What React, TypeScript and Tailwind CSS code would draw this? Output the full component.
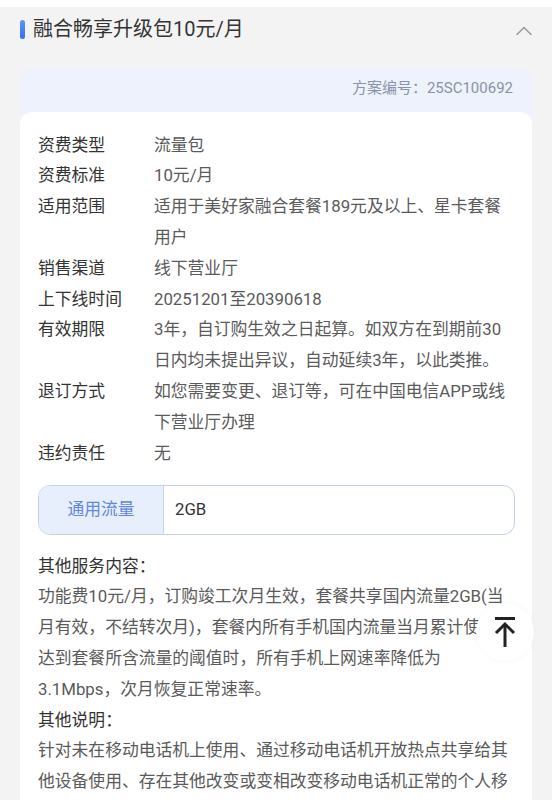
import React from "react";

const rows: { label: string; value: string }[] = [
  { label: "资费类型", value: "流量包" },
  { label: "资费标准", value: "10元/月" },
  { label: "适用范围", value: "适用于美好家融合套餐189元及以上、星卡套餐用户" },
  { label: "销售渠道", value: "线下营业厅" },
  { label: "上下线时间", value: "20251201至20390618" },
  { label: "有效期限", value: "3年，自订购生效之日起算。如双方在到期前30日内均未提出异议，自动延续3年，以此类推。" },
  { label: "退订方式", value: "如您需要变更、退订等，可在中国电信APP或线下营业厅办理" },
  { label: "违约责任", value: "无" },
];

export default function App() {
  return (
    <div
      className="relative w-[552px] h-[800px] overflow-hidden bg-[#f3f3f3]"
      style={{ fontFamily: 'Roboto, "Noto Sans CJK SC", "Noto Sans", sans-serif' }}
    >
      <div className="h-[7px] bg-white" />
      {/* Title row */}
      <div className="h-[44px] flex items-center pl-[20px] pr-[20px]">
        <div className="w-[5px] h-[19px] rounded-full bg-gradient-to-b from-[#5b95f8] to-[#3a6fe6]" />
        <div className="ml-[8px] text-[20px] leading-[28px] text-[#333]">融合畅享升级包10元/月</div>
        <div className="flex-1" />
        <svg width="16" height="10" viewBox="0 0 16 10" className="mt-[4px]">
          <polyline points="1,8.5 8,1.5 15,8.5" fill="none" stroke="#9c9c9c" strokeWidth="1.6" strokeLinecap="round" strokeLinejoin="round" />
        </svg>
      </div>

      {/* Card */}
      <div className="mt-[17px] mx-[20px] rounded-[12px] bg-[#edf2fc]">
        <div className="flex justify-end pt-[10px] pb-[14px] pr-[19px] text-[15px] leading-[20px] text-[#8a93a6]">
          方案编号：25SC100692
        </div>
        <div className="bg-white rounded-t-[12px] pl-[18px] pr-[17px] pt-[17.6px] pb-[20px]">
          <div className="flex flex-col">
            {rows.map((r) => (
              <div key={r.label} className="flex text-[16.8px] leading-[30.8px]">
                <div className="w-[116px] shrink-0 text-[#333]">{r.label}</div>
                <div className="flex-1 text-[#5a5a5a]">{r.value}</div>
              </div>
            ))}
          </div>

          <div className="mt-[16.6px] flex h-[50px] rounded-[12px] border-[1.5px] border-[#c3d0f0] overflow-hidden">
            <div className="w-[125px] shrink-0 flex items-center justify-center bg-[#e8effc] border-r-[1.5px] border-[#c9d5f2] text-[16.8px] text-[#6288d8]">
              通用流量
            </div>
            <div className="flex-1 flex items-center pl-[11px] text-[16.8px] text-[#333]">2GB</div>
          </div>

          <div className="mt-[15.6px] text-[16.8px] leading-[30.8px]">
            <div className="text-[#333]">其他服务内容：</div>
            <div className="text-[#5a5a5a]">
              功能费10元/月，订购竣工次月生效，套餐共享国内流量2GB(当月有效，不结转次月)，套餐内所有手机国内流量当月累计使用，达到套餐所含流量的阈值时，所有手机上网速率降低为3.1Mbps，次月恢复正常速率。
            </div>
            <div className="text-[#333]">其他说明：</div>
            <div className="text-[#5a5a5a]">
              针对未在移动电话机上使用、通过移动电话机开放热点共享给其他设备使用、存在其他改变或变相改变移动电话机正常的个人移动通信使用方式等情况，中国电信有权根据相关规定进行处理。
            </div>
          </div>
        </div>
      </div>

      {/* Scroll to top */}
      <div className="absolute left-[476px] top-[603px] w-[58px] h-[58px] rounded-full bg-white shadow-[0_0_6px_rgba(0,0,0,0.03)] flex items-center justify-center">
        <svg width="22" height="32" viewBox="0 0 22 32">
          <line x1="1" y1="2.5" x2="21" y2="2.5" stroke="#222" strokeWidth="3" />
          <line x1="11" y1="8" x2="11" y2="31" stroke="#222" strokeWidth="3" />
          <polyline points="2,17 11,8 20,17" fill="none" stroke="#222" strokeWidth="3" />
        </svg>
      </div>
    </div>
  );
}
